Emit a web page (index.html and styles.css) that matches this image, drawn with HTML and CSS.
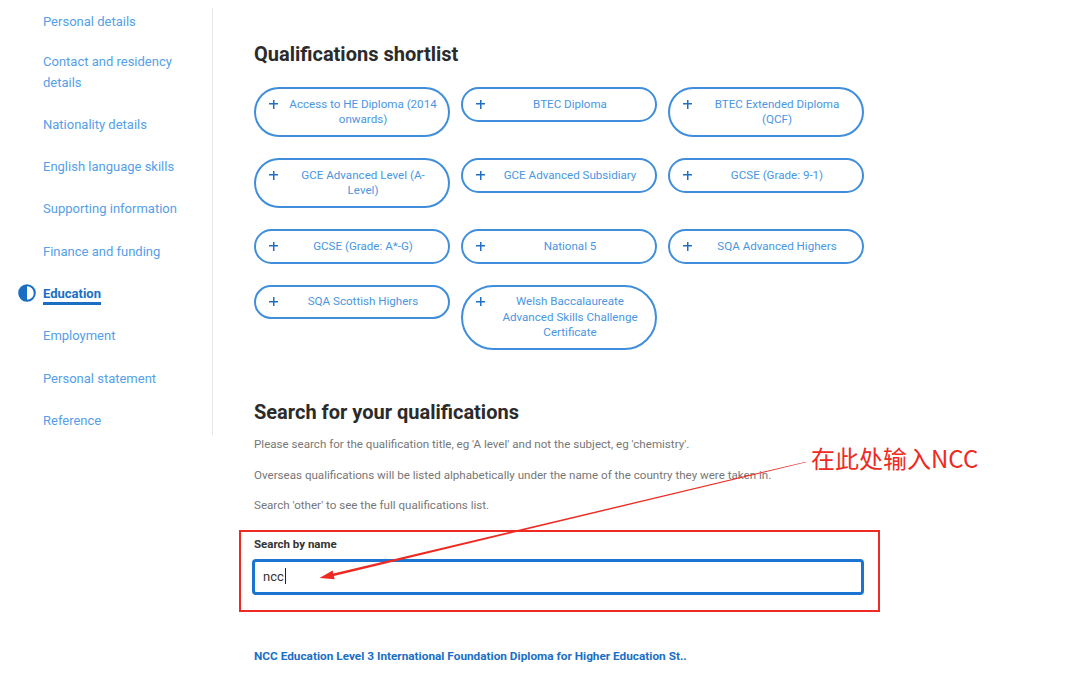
FILE: index.html
```html
<!DOCTYPE html>
<html lang="en">
<head>
  <meta charset="UTF-8" />
  <title>Education</title>
  <link rel="stylesheet" href="styles.css">
</head>
<body>

  <div class="page">
    <nav class="steps">
      <ul>
        <li><a href="#">Personal details</a></li>
        <li><a href="#">Contact and residency details</a></li>
        <li><a href="#">Nationality details</a></li>
        <li><a href="#">English language skills</a></li>
        <li><a href="#">Supporting information</a></li>
        <li><a href="#">Finance and funding</a></li>
        <li class="active">
          <svg class="step-icon" width="18" height="18" viewBox="0 0 18 18">
            <circle cx="9" cy="9" r="7.8" fill="#fff" stroke="#1a6fc4" stroke-width="2"/>
            <path d="M9 1.2 A7.8 7.8 0 0 0 9 16.8 Z" fill="#1a6fc4"/>
          </svg>
          <a href="#">Education</a>
        </li>
        <li><a href="#">Employment</a></li>
        <li><a href="#">Personal statement</a></li>
        <li><a href="#">Reference</a></li>
      </ul>
    </nav>

    <main class="content">
      <h2>Qualifications shortlist</h2>

      <div class="shortlist">
        <button class="qual"><span class="plus"></span><span class="qual-name">Access to HE Diploma (2014 onwards)</span></button>
        <button class="qual"><span class="plus"></span><span class="qual-name">BTEC Diploma</span></button>
        <button class="qual"><span class="plus"></span><span class="qual-name">BTEC Extended Diploma (QCF)</span></button>
        <button class="qual"><span class="plus"></span><span class="qual-name">GCE Advanced Level (A-Level)</span></button>
        <button class="qual"><span class="plus"></span><span class="qual-name">GCE Advanced Subsidiary</span></button>
        <button class="qual"><span class="plus"></span><span class="qual-name">GCSE (Grade: 9-1)</span></button>
        <button class="qual"><span class="plus"></span><span class="qual-name">GCSE (Grade: A*-G)</span></button>
        <button class="qual"><span class="plus"></span><span class="qual-name">National 5</span></button>
        <button class="qual"><span class="plus"></span><span class="qual-name">SQA Advanced Highers</span></button>
        <button class="qual"><span class="plus"></span><span class="qual-name">SQA Scottish Highers</span></button>
        <button class="qual"><span class="plus"></span><span class="qual-name">Welsh Baccalaureate Advanced Skills Challenge Certificate</span></button>
      </div>

      <h2 class="search-title">Search for your qualifications</h2>
      <p class="hint">Please search for the qualification title, eg 'A level' and not the subject, eg 'chemistry'.</p>
      <p class="hint">Overseas qualifications will be listed alphabetically under the name of the country they were taken in.</p>
      <p class="hint">Search 'other' to see the full qualifications list.</p>

      <div class="field highlight">
        <label for="qualSearch">Search by name</label>
        <div class="search-box" id="qualSearch">ncc<span class="caret"></span></div>
      </div>

      <a class="result" href="#">NCC Education Level 3 International Foundation Diploma for Higher Education St..</a>
    </main>
  </div>

  <div class="note">在此处输入NCC</div>
  <svg class="arrow" width="1080" height="689" viewBox="0 0 1080 689">
    <polygon fill="#ee2a22" points="806.1,462.3 805.9,461.7 333.3,573.6 332.6,570.4 319.5,578 334.6,579.2 333.9,576"/>
  </svg>

</body>
</html>
```

FILE: styles.css
```css
body {
  font-family: Roboto, "Noto Sans", Arial, sans-serif;
  background-color: #fff;
  margin: 0;
  position: relative;
}
a {
  text-decoration: none;
}
.page {
  display: flex;
  align-items: flex-start;
}
.steps {
  width: 150px;
  margin-top: 8px;
  padding: 2.5px 19px 4px 43px;
  border-right: 1px solid #e6e6e6;
}
.steps ul {
  list-style: none;
  margin: 0;
  padding: 0;
}
.steps li {
  display: flex;
  align-items: center;
  font-size: 13px;
  line-height: 21px;
  margin-bottom: 21.3px;
}
.steps li:first-child {
  margin-bottom: 19px;
}
.steps li:last-child {
  margin-bottom: 0;
}
.steps a {
  color: #55a0e8;
}
.steps .active a {
  color: #1a6fc4;
  font-weight: bold;
  text-decoration: underline;
  text-decoration-thickness: 2.5px;
  text-underline-offset: 4px;
}
.step-icon {
  flex: none;
  margin-left: -25px;
  margin-right: 7px;
}
.content {
  padding: 42px 0 0 41px;
}
h2 {
  margin: 0;
  font-size: 20px;
  line-height: 24px;
  font-weight: bold;
  color: #2b2b2b;
}
.shortlist {
  display: grid;
  grid-template-columns: repeat(3, 196px);
  gap: 21px 11px;
  align-items: start;
  margin-top: 21px;
}
.qual {
  display: flex;
  align-items: flex-start;
  box-sizing: border-box;
  width: 196px;
  padding: 7.5px 10px 7.5px 13px;
  border: 2px solid #3f8ddb;
  border-radius: 34px;
  background: #fff;
  font-family: inherit;
  font-size: 11.6px;
  line-height: 15.5px;
  color: #4a96e2;
  text-align: center;
  cursor: pointer;
}
.plus {
  flex: none;
  width: 9px;
  height: 9px;
  margin: 3px 10px 0 0;
  background:
    linear-gradient(#1f6fc5, #1f6fc5) center / 9px 1.5px no-repeat,
    linear-gradient(#1f6fc5, #1f6fc5) center / 1.5px 9px no-repeat;
}
.qual-name {
  flex: 1;
}
.search-title {
  margin-top: 50px;
}
.hint {
  margin: 12.5px 0 0;
  font-size: 11.6px;
  line-height: 18px;
  color: #777;
}
.search-title + .hint {
  margin-top: 11px;
}
.field {
  width: 612px;
  margin: 16px 0 0 -15px;
  padding: 4px 14px 15px 11px;
  border: 2px solid #ee2a22;
}
.field label {
  display: block;
  padding-left: 2px;
  font-size: 11.5px;
  line-height: 16px;
  font-weight: bold;
  color: #333;
}
.search-box {
  box-sizing: border-box;
  height: 36px;
  margin-top: 7px;
  padding: 0 8px;
  border: 3px solid #1b74d1;
  border-radius: 4px;
  font-size: 13px;
  line-height: 30px;
  color: #333;
}
.caret {
  display: inline-block;
  width: 1px;
  height: 16px;
  margin-left: 1px;
  vertical-align: -3px;
  background: #222;
}
.result {
  display: block;
  margin-top: 36px;
  font-size: 11.8px;
  line-height: 16px;
  font-weight: bold;
  color: #1a6fc4;
}
.note {
  position: absolute;
  left: 811px;
  top: 443px;
  font-family: "Noto Sans CJK SC", "Noto Sans", sans-serif;
  font-size: 24px;
  line-height: 30px;
  color: #ee2a22;
}
.arrow {
  position: absolute;
  left: 0;
  top: 0;
  pointer-events: none;
}
```
